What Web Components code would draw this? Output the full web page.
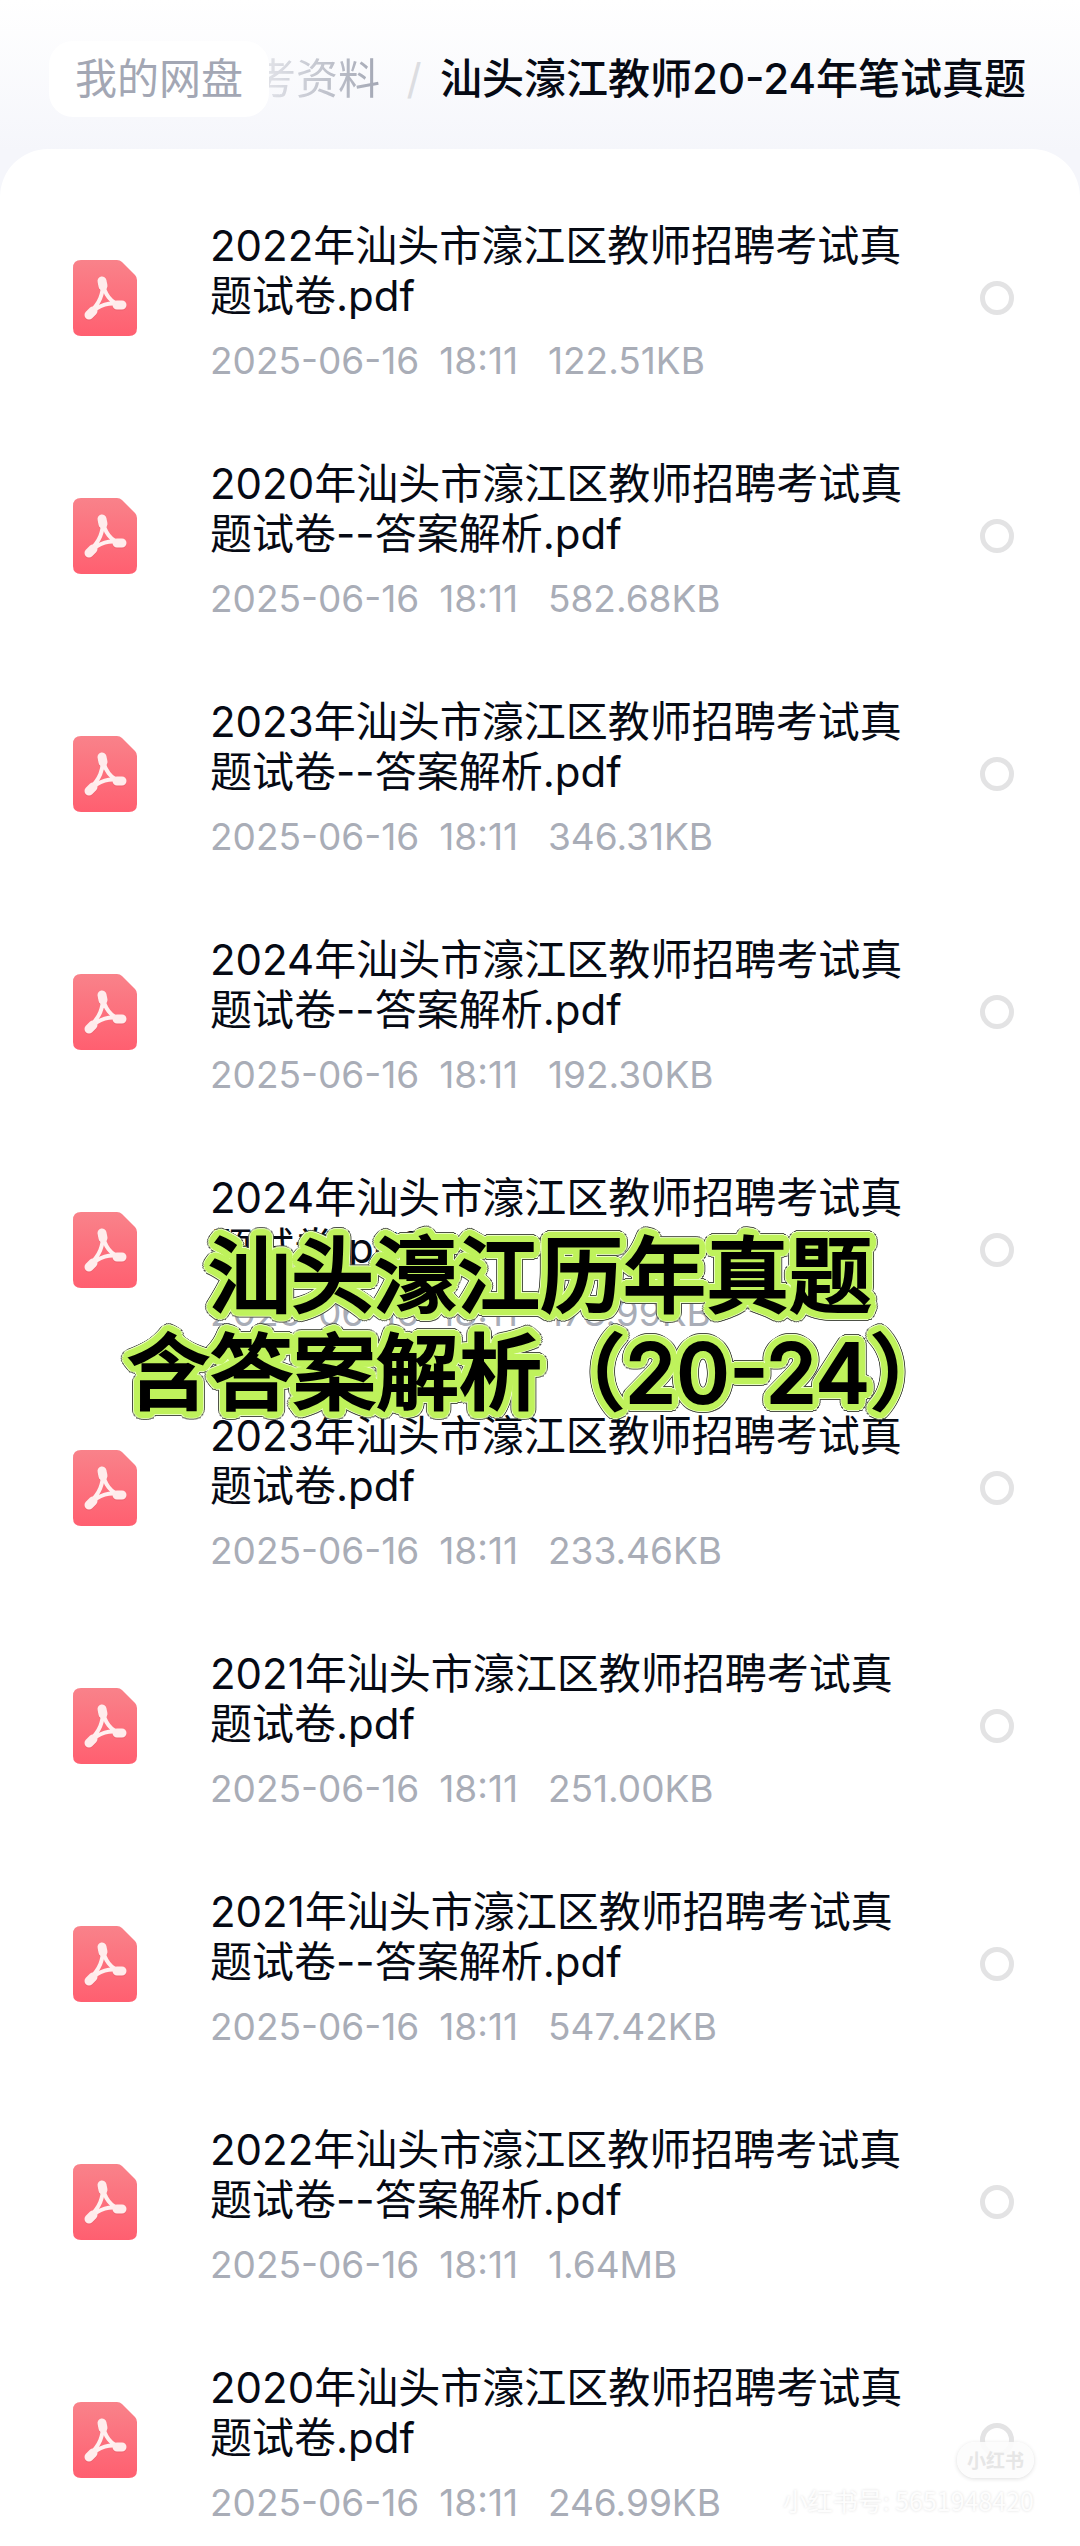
<!DOCTYPE html>
<html lang="zh-CN">
<head>
<meta charset="utf-8">
<meta name="viewport" content="width=device-width, initial-scale=1">
<title>我的网盘</title>
<style>
    body {
        margin: 0;
        background: #f5f6fb;
        font-family: Inter, "Noto Sans CJK SC", sans-serif;
        color: #060a14;
    }
</style>
</head>
<body>
<pan-page>
    <pan-breadcrumb slot="header"></pan-breadcrumb>
    <pan-caption slot="caption">汕头濠江历年真题<br>含答案解析（20-24）</pan-caption>
    <pan-watermark slot="watermark" brand="小红书">小红书号: 5651948420</pan-watermark>
</pan-page>

<script>
const files = [
    ["2022年汕头市濠江区教师招聘考试真题试卷.pdf", "122.51KB"],
    ["2020年汕头市濠江区教师招聘考试真题试卷--答案解析.pdf", "582.68KB"],
    ["2023年汕头市濠江区教师招聘考试真题试卷--答案解析.pdf", "346.31KB"],
    ["2024年汕头市濠江区教师招聘考试真题试卷--答案解析.pdf", "192.30KB"],
    ["2024年汕头市濠江区教师招聘考试真题试卷.pdf", "173.99KB"],
    ["2023年汕头市濠江区教师招聘考试真题试卷.pdf", "233.46KB"],
    ["2021年汕头市濠江区教师招聘考试真题试卷.pdf", "251.00KB"],
    ["2021年汕头市濠江区教师招聘考试真题试卷--答案解析.pdf", "547.42KB"],
    ["2022年汕头市濠江区教师招聘考试真题试卷--答案解析.pdf", "1.64MB"],
    ["2020年汕头市濠江区教师招聘考试真题试卷.pdf", "246.99KB"]
];

function makeTemplate(html){
    const template = document.createElement('template');
    template.innerHTML = html;
    return template;
}

const pageTemplate = makeTemplate(`
    <style>
        :host {
            display: block;
            position: relative;
            overflow: hidden;
            background: linear-gradient(#ffffff, #f5f6fb 150px)
        }
        main {
            display: flex;
            flex-direction: column;
            gap: 72px;
            padding: 66px 66px 23px 73px;
            background: white;
            border-radius: 48px 48px 0 0
        }
        ::slotted([slot=caption]) {
            position: absolute;
            top: 1228px;
            left: 0;
            right: 0
        }
        ::slotted([slot=watermark]) {
            position: absolute;
            right: 46px;
            bottom: 28px
        }
    </style>
    <slot name="header"></slot>
    <main></main>
    <slot name="caption"></slot>
    <slot name="watermark"></slot>
`);

class pan_page extends HTMLElement{
    constructor(){
        super();
        this.attachShadow({mode: "open"})
        this.shadowRoot.append(pageTemplate.content.cloneNode(true));
    }
    connectedCallback(){
        const main = this.shadowRoot.querySelector("main");
        main.replaceChildren();
        for(const [name, size] of files){
            const row = document.createElement("pan-file");
            row.setAttribute("name", name);
            row.setAttribute("date", "2025-06-16");
            row.setAttribute("time", "18:11");
            row.setAttribute("size", size);
            main.append(row);
        }
    }
}

const breadcrumbTemplate = makeTemplate(`
    <style>
        :host {
            display: block
        }
        nav {
            display: flex;
            align-items: center;
            height: 149px;
            padding: 8px 40px 0 49px;
            box-sizing: border-box;
            font-size: 42px;
            line-height: 60px;
            white-space: nowrap
        }
        a {
            color: #a3a7b4;
            text-decoration: none
        }
        .root {
            padding: 8px 26px;
            border-radius: 24px;
            background: white
        }
        /* earlier crumbs slide under the root pill */
        .parent {
            display: flex;
            justify-content: flex-end;
            width: 111px;
            overflow: hidden;
            -webkit-mask-image: linear-gradient(90deg, rgba(0,0,0,.3), black);
            mask-image: linear-gradient(90deg, rgba(0,0,0,.3), black)
        }
        .sep {
            width: 52px;
            padding-left: 8px;
            text-align: center;
            color: #dcdde1
        }
        .current {
            color: #060a14;
            font-weight: 500
        }
    </style>
    <nav>
        <a class="root" href="#">我的网盘</a>
        <a class="parent" href="#parent"><span>考资料</span></a>
        <span class="sep">/</span>
        <a class="current" href="#current">汕头濠江教师20-24年笔试真题</a>
    </nav>
`);

class pan_breadcrumb extends HTMLElement{
    constructor(){
        super();
        this.attachShadow({mode: "open"})
        this.shadowRoot.append(breadcrumbTemplate.content.cloneNode(true));
    }
}

const iconTemplate = makeTemplate(`
    <style>
        :host {
            display: block
        }
        svg {
            display: block;
            width: 100%
        }
    </style>
    <svg viewBox="0 0 64 76">
        <defs>
            <linearGradient id="sheet" x1="0" y1="0" x2="0" y2="1">
                <stop offset="0" stop-color="#f9828a"/>
                <stop offset="1" stop-color="#ff5f70"/>
            </linearGradient>
        </defs>
        <path fill="url(#sheet)" d="M8 0H44Q47 0 49 2L62 15Q64 17 64 20V68Q64 76 56 76H8Q0 76 0 68V8Q0 0 8 0Z"/>
        <g fill="none" stroke-linecap="round" stroke-linejoin="round">
            <path stroke="#d9505f" stroke-opacity=".4" stroke-width="9" d="M29 22L30 27M49 46L44 46M16 56L20 52"/>
            <path stroke="#fff0f0" stroke-width="4" d="M30 22C30 35 27 42 17 53M30 22C31 34 38 43 48 45M17 54C25 45 38 41 48 45"/>
            <path stroke="#ffecec" stroke-width="9" d="M29 21L30 26M49 45L44 45M16 55L20 51"/>
        </g>
    </svg>
`);

class pan_pdf_icon extends HTMLElement{
    constructor(){
        super();
        this.attachShadow({mode: "open"})
        this.shadowRoot.append(iconTemplate.content.cloneNode(true));
    }
}

const fileTemplate = makeTemplate(`
    <style>
        :host {
            display: grid;
            grid-template-columns: 64px minmax(0, 1fr) 34px;
            align-items: center
        }
        .text {
            padding: 6px 68px 0 73px
        }
        label {
            display: block;
            font-size: 42px;
            line-height: 50px
        }
        .meta {
            display: flex;
            gap: 20px;
            margin-top: 20px;
            font-size: 37px;
            line-height: 40px;
            color: #a9adb7
        }
        #size {
            margin-left: 10px
        }
        input {
            appearance: none;
            width: 34px;
            height: 34px;
            margin: 0;
            border: 5px solid #e3e3e4;
            border-radius: 50%;
            background: white
        }
        input:checked {
            background: #ff5f70
        }
    </style>
    <pan-pdf-icon></pan-pdf-icon>
    <div class="text">
        <label for="pick"></label>
        <div class="meta">
            <span id="date"></span>
            <span id="time"></span>
            <span id="size"></span>
        </div>
    </div>
    <input type="checkbox" id="pick">
`);

class pan_file extends HTMLElement{
    static get observedAttributes(){
        return ["name", "date", "time", "size"];
    }
    constructor(){
        super();
        this.attachShadow({mode: "open"})
        this.shadowRoot.append(fileTemplate.content.cloneNode(true));
    }
    connectedCallback(){
        this.__renderContents()
    }
    attributeChangedCallback(attr, oldValue, newValue){
        if(this.isConnected) this.__renderContents()
    }
    __renderContents(){
        this.shadowRoot.querySelector("label").textContent = this.getAttribute("name");
        for(const key of ["date", "time", "size"]){
            this.shadowRoot.querySelector("#" + key).textContent = this.getAttribute(key);
        }
    }
}

const captionTemplate = makeTemplate(`
    <style>
        :host {
            display: block;
            pointer-events: none
        }
        p {
            margin: 0;
            text-align: center;
            font-size: 83px;
            font-weight: 500;
            line-height: 97px;
            white-space: nowrap;
            color: black;
            -webkit-text-stroke: 2px black
        }
    </style>
    <p><slot></slot></p>
`);

// one ring of shadows gives an outline with round corners
function ring(radius, color){
    const shadows = [];
    for(let i = 0; i < 32; i++){
        const angle = i * Math.PI / 16;
        const x = (radius * Math.cos(angle)).toFixed(1);
        const y = (radius * Math.sin(angle)).toFixed(1);
        shadows.push(`${x}px ${y}px 0 ${color}`);
    }
    return shadows;
}

class pan_caption extends HTMLElement{
    constructor(){
        super();
        this.attachShadow({mode: "open"})
        this.shadowRoot.append(captionTemplate.content.cloneNode(true));
        this.shadowRoot.querySelector("p").style.textShadow = [
            ...ring(3, "#bff25c"),
            ...ring(7, "#bff25c"),
            ...ring(8, "#eaffc0"),
            ...ring(9, "#4c5046")
        ].join(", ");
    }
}

const watermarkTemplate = makeTemplate(`
    <style>
        :host {
            display: flex;
            flex-direction: column;
            align-items: flex-end;
            gap: 4px;
            font-family: "Noto Sans CJK SC", sans-serif;
            font-size: 25px;
            line-height: 36px;
            color: #fdfdfd;
            text-shadow: 0 0 3px #dddddd;
            pointer-events: none
        }
        #brand {
            padding: 0 10px;
            border-radius: 18px;
            font-size: 19px;
            font-weight: 700;
            color: #e6e6e6;
            text-shadow: none;
            background: rgba(252, 252, 252, .9);
            box-shadow: 0 1px 4px #dddddd
        }
    </style>
    <span id="brand"></span>
    <span><slot></slot></span>
`);

class pan_watermark extends HTMLElement{
    constructor(){
        super();
        this.attachShadow({mode: "open"})
        this.shadowRoot.append(watermarkTemplate.content.cloneNode(true));
    }
    connectedCallback(){
        this.shadowRoot.querySelector("#brand").textContent = this.getAttribute("brand");
    }
}

customElements.define("pan-pdf-icon", pan_pdf_icon)
customElements.define("pan-file", pan_file)
customElements.define("pan-breadcrumb", pan_breadcrumb)
customElements.define("pan-caption", pan_caption)
customElements.define("pan-watermark", pan_watermark)
customElements.define("pan-page", pan_page)
</script>
</body>
</html>
